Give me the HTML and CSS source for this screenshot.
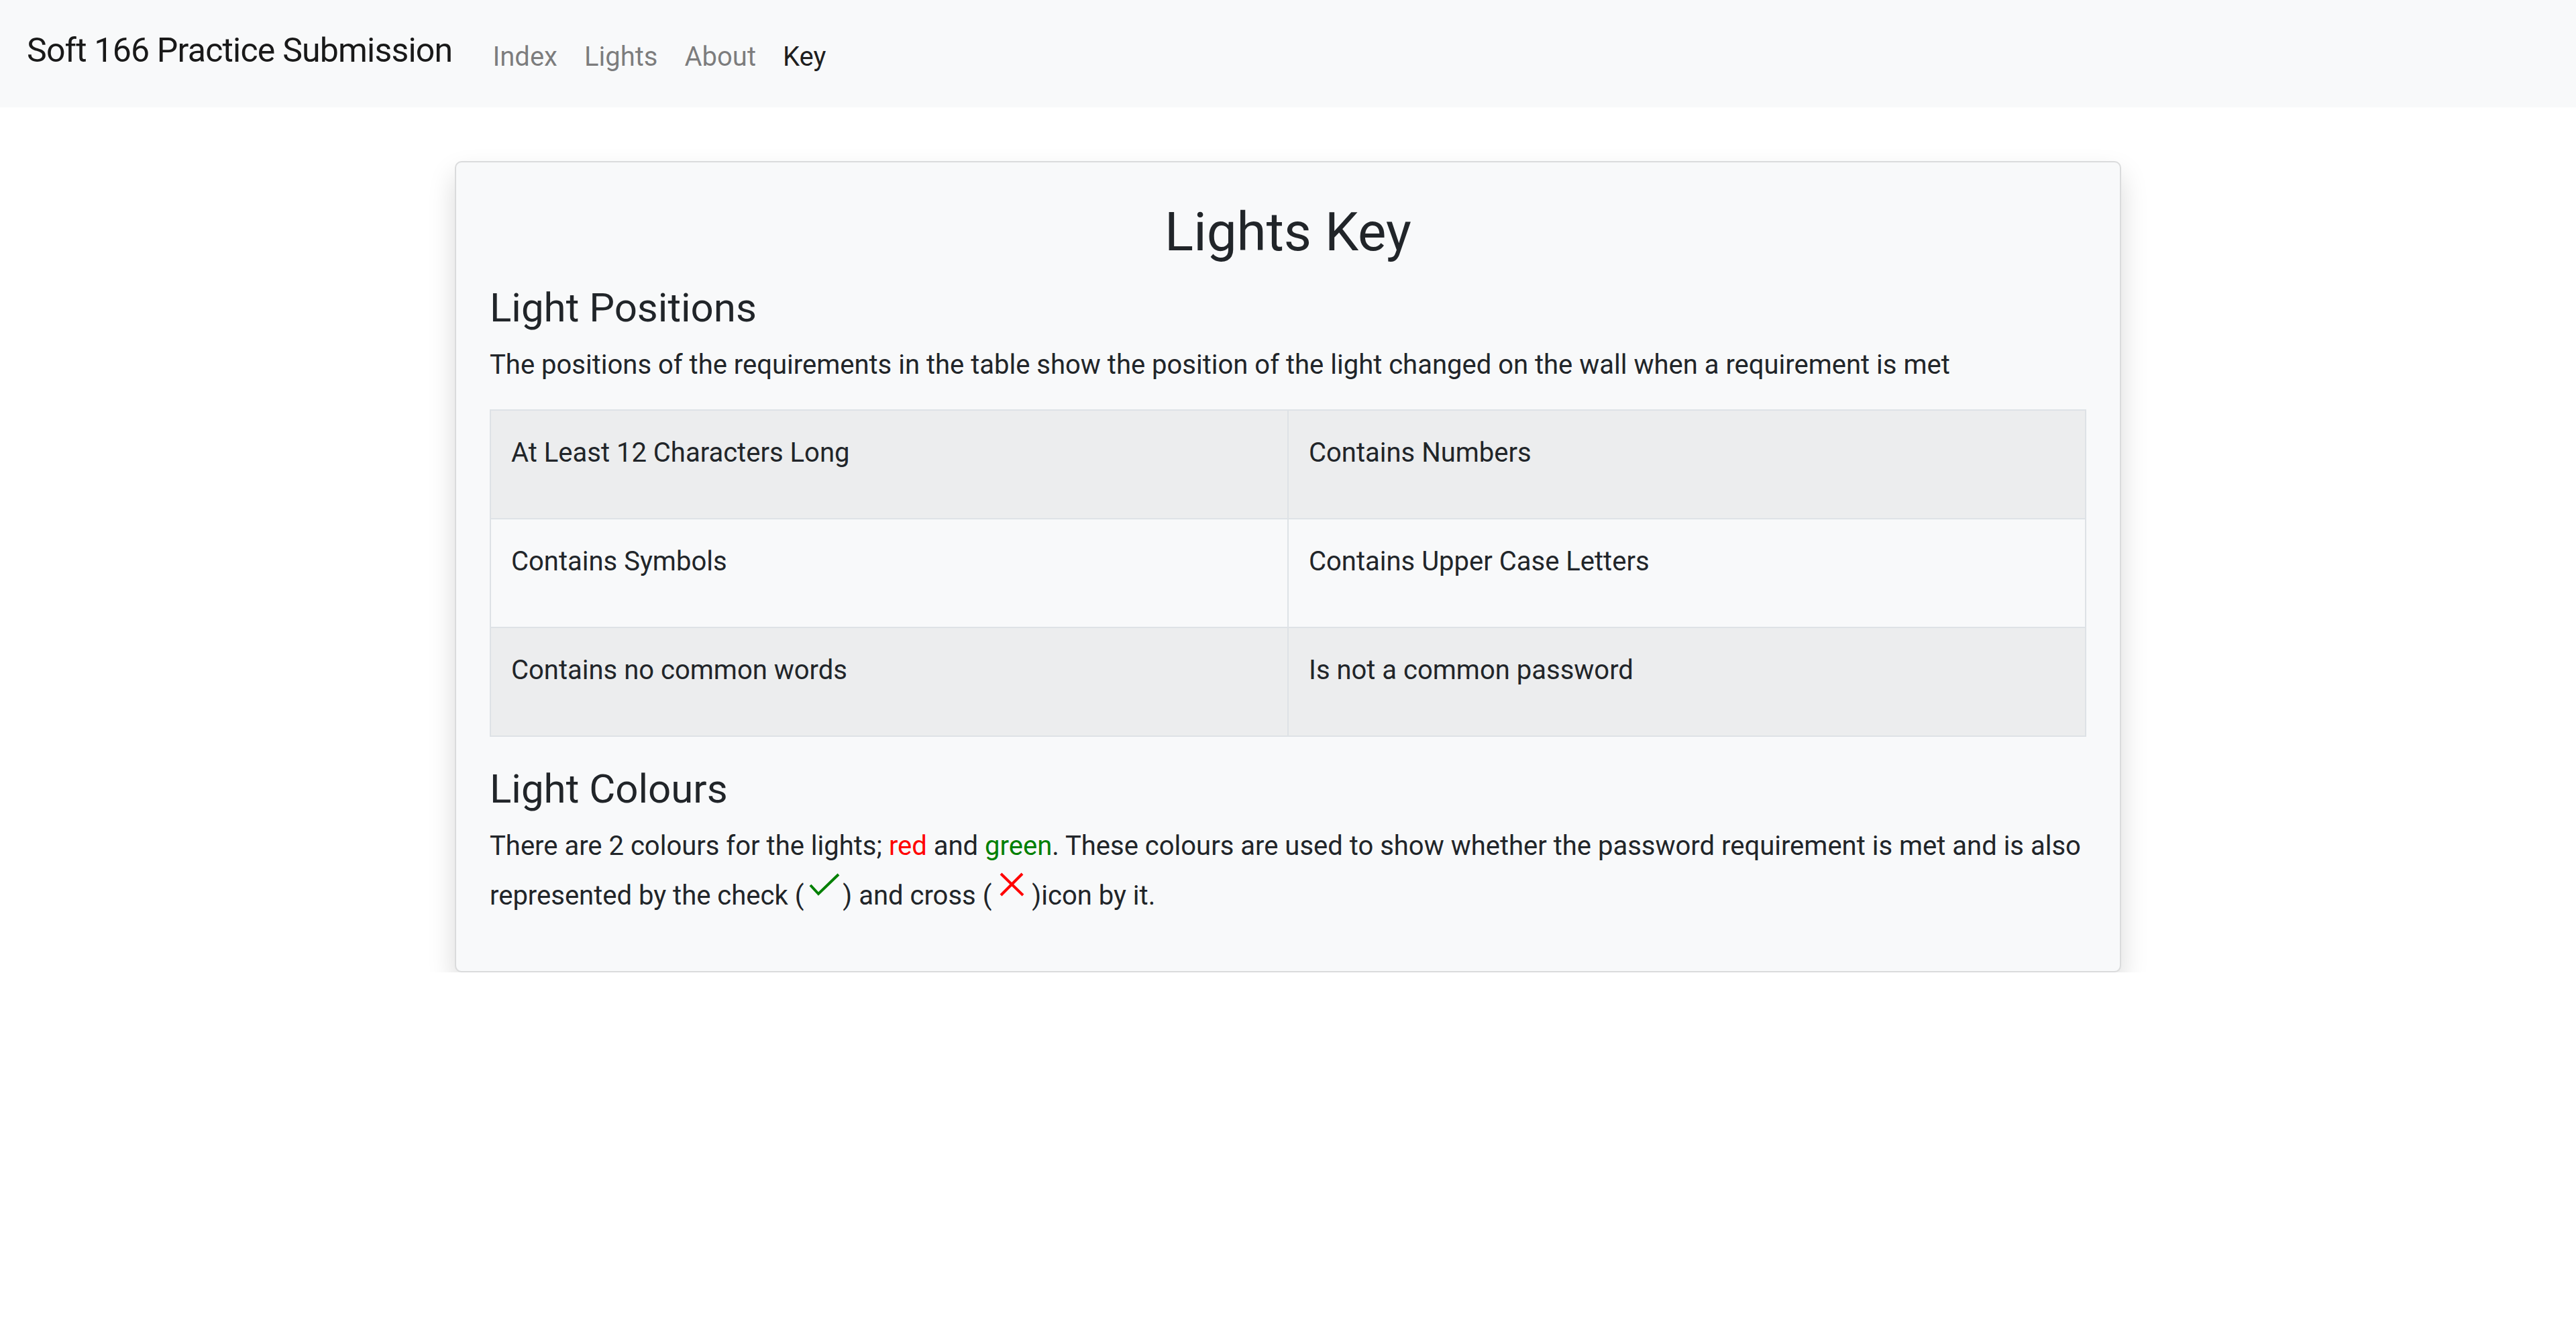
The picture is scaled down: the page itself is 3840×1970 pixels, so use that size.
FILE: index.html
```html
<!DOCTYPE html>
<html lang="en">
<head>
<meta charset="utf-8">
<title>Lights Key</title>
<link rel="stylesheet" href="styles.css">
</head>
<body>
<nav class="navbar">
  <a class="brand" href="#">Soft 166 Practice Submission</a>
  <ul class="nav">
    <li><a class="nav-link" href="#">Index</a></li>
    <li><a class="nav-link" href="#">Lights</a></li>
    <li><a class="nav-link" href="#">About</a></li>
    <li><a class="nav-link active" href="#">Key</a></li>
  </ul>
</nav>
<main class="card">
  <h2 class="title">Lights Key</h2>
  <h4 class="section-title">Light Positions</h4>
  <p class="text">The positions of the requirements in the table show the position of the light changed on the wall when a requirement is met</p>
  <table class="key-table">
    <tr class="striped">
      <td><p class="cell-text">At Least 12 Characters Long</p></td>
      <td><p class="cell-text">Contains Numbers</p></td>
    </tr>
    <tr>
      <td><p class="cell-text">Contains Symbols</p></td>
      <td><p class="cell-text">Contains Upper Case Letters</p></td>
    </tr>
    <tr class="striped">
      <td><p class="cell-text">Contains no common words</p></td>
      <td><p class="cell-text">Is not a common password</p></td>
    </tr>
  </table>
  <h4 class="section-title second">Light Colours</h4>
  <p class="text last">There are 2 colours for the lights; <span class="red">red</span> and <span class="green">green</span>. These colours are used to show whether the password requirement is met and is also represented by the check (<svg class="icon icon-check" width="58" height="57" viewBox="0 0 58 57"><polyline points="10,28 22,41 52,12" fill="none" stroke="#008000" stroke-width="4"/></svg>) and cross (<svg class="icon icon-cross" width="60" height="57" viewBox="0 0 60 57"><line x1="14" y1="11" x2="47" y2="43" stroke="#ff0000" stroke-width="4"/><line x1="46" y1="11" x2="14" y2="43" stroke="#ff0000" stroke-width="4"/></svg>)icon by it.</p>
</main>
</body>
</html>
```

FILE: styles.css
```css
html, body {
  margin: 0;
  padding: 0;
  background: #ffffff;
}

body {
  font-family: Roboto, "Liberation Sans", sans-serif;
  color: #212529;
  font-size: 40px;
  line-height: 60px;
}

.navbar {
  display: flex;
  align-items: flex-start;
  height: 160px;
  box-sizing: border-box;
  padding: 38px 40px 0 40px;
  background: #f8f9fa;
}

.brand {
  font-size: 50px;
  line-height: 75px;
  letter-spacing: -0.8px;
  color: rgba(0, 0, 0, 0.9);
  text-decoration: none;
  margin-right: 40px;
  white-space: nowrap;
}

.nav {
  display: flex;
  list-style: none;
  margin: 17px 0 0 0;
  padding: 0;
}

.nav-link {
  display: block;
  padding: 0 20px;
  font-size: 40px;
  line-height: 60px;
  color: rgba(0, 0, 0, 0.5);
  text-decoration: none;
}

.nav-link.active {
  color: rgba(0, 0, 0, 0.9);
}

.card {
  display: block;
  width: 2484px;
  box-sizing: border-box;
  margin: 80px auto 0 auto;
  padding: 50px;
  background: #f8f9fa;
  border: 2px solid #dadbdc;
  border-radius: 10px;
  box-shadow: 0 20px 40px rgba(0, 0, 0, 0.15);
}

.title {
  margin: 6px 0 29px 0;
  font-size: 80px;
  line-height: 96px;
  font-weight: 400;
  text-align: center;
}

.section-title {
  margin: 0 0 19px 0;
  font-size: 60px;
  line-height: 72px;
  font-weight: 400;
}

.section-title.second {
  margin-top: 0;
}

.text {
  margin: 0 0 36px 0;
}

.text.last {
  margin-bottom: 32px;
}

.key-table {
  width: 100%;
  border-collapse: collapse;
  table-layout: fixed;
  margin-bottom: 42px;
  border: 2px solid #dee2e6;
}

.key-table td {
  border: 2px solid #dee2e6;
  padding: 33px 30px 27px 30px;
  vertical-align: top;
}

.key-table tr.striped {
  background: #ecedee;
}

.cell-text {
  margin: 0 0 40px 0;
}

.red {
  color: #ff0000;
}

.green {
  color: #008000;
}

.icon {
  vertical-align: baseline;
}
```
